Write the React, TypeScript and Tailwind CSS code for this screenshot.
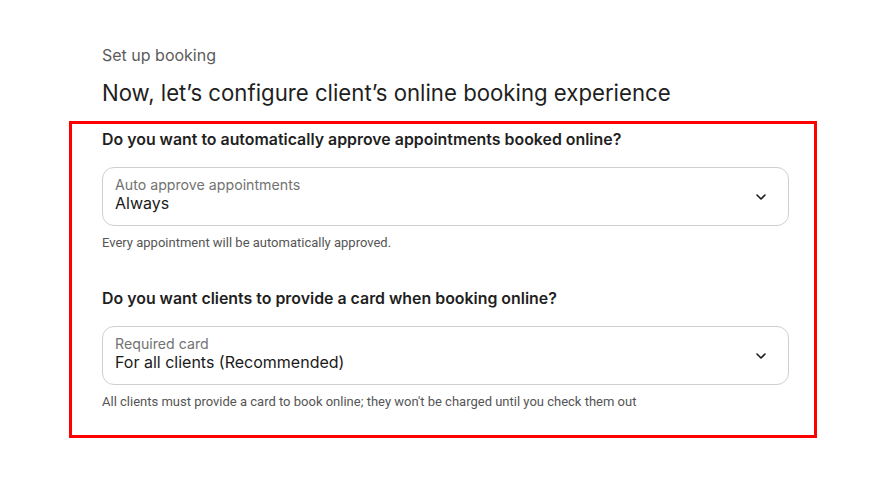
import { ChevronDown } from "lucide-react";

function SelectField({ label, value }: { label: string; value: string }) {
    return (
        <div className="flex h-[59px] items-center justify-between rounded-xl border border-[#cfcfcf] bg-white pl-[12px] pr-[19px]">
            <div className="flex flex-col self-start pt-[8px]">
                <span className="text-[14.2px] leading-[17px] text-[#737373]">{label}</span>
                <span className="text-[16px] leading-[20px] text-[#1a1a1a]">{value}</span>
            </div>
            <ChevronDown size={16} strokeWidth={2.4} className="text-[#1a1a1a]" />
        </div>
    );
}

export default function App() {
    return (
        <main className="min-h-screen bg-white font-['Inter',sans-serif]">
            <div className="pl-[69px] pt-[45px] w-[817px]">
                <div className="pl-[33px]">
                    <p className="text-[16px] leading-[20px] text-[#5c5c5c]">Set up booking</p>
                    <h1 className="mt-[17px] text-[22.2px] leading-[22px] font-normal text-[#1f1f1f]">
                        Now, let’s configure client’s online booking experience
                    </h1>
                </div>

                <section className="mt-[17px] border-[3px] border-[#ff0000] pl-[30px] pr-[25px] pt-[4px] pb-[25px]">
                    <h2 className="text-[15.9px] leading-[24px] font-semibold text-[#1f1f1f]">
                        Do you want to automatically approve appointments booked online?
                    </h2>
                    <div className="mt-[15px]">
                        <SelectField label="Auto approve appointments" value="Always" />
                    </div>
                    <p className="mt-[9px] font-['Roboto',sans-serif] text-[13px] leading-[16px] text-[#555555]">
                        Every appointment will be automatically approved.
                    </p>

                    <h2 className="mt-[36px] text-[15.9px] leading-[24px] font-semibold text-[#1f1f1f]">
                        Do you want clients to provide a card when booking online?
                    </h2>
                    <div className="mt-[15px]">
                        <SelectField label="Required card" value="For all clients (Recommended)" />
                    </div>
                    <p className="mt-[9px] font-['Roboto',sans-serif] text-[13px] leading-[16px] text-[#555555]">
                        All clients must provide a card to book online; they won't be charged until you check them out
                    </p>
                </section>
            </div>
        </main>
    );
}
